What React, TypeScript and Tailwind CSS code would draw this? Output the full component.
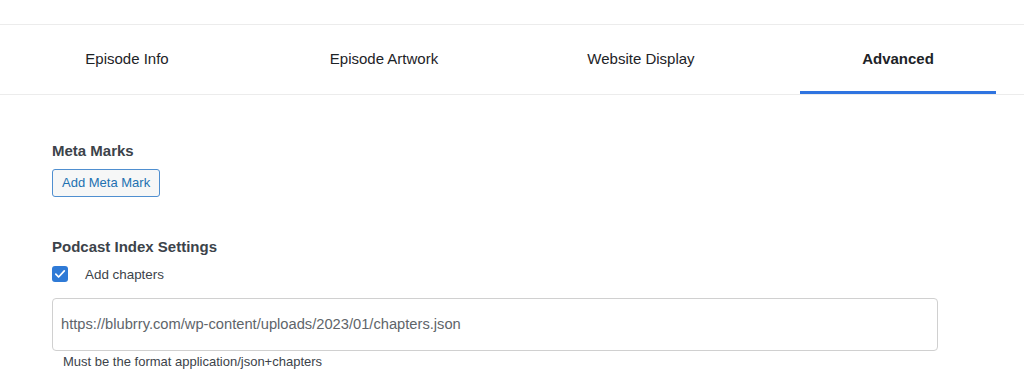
import React from "react";

const font = { fontFamily: '-apple-system, "Helvetica Neue", "Liberation Sans", Arial, sans-serif' };

export default function App() {
  const tabs = ["Episode Info", "Episode Artwork", "Website Display", "Advanced"];
  const active = 3;

  return (
    <div className="w-[1024px] h-[389px] bg-white overflow-hidden" style={font}>
      <div className="h-6" />
      <div className="flex h-[71px] border-t border-b border-[#ececec] text-[15px] text-[#1d2327]">
        {tabs.map((t, i) => (
          <div key={t} className="w-[257px] shrink-0 pl-[29px] pr-[32px] flex">
            <div
              className={
                "flex-1 flex items-center justify-center pt-[2px] border-b-[3px] " +
                (i === active ? "border-[#2f74e0] font-bold" : "border-transparent")
              }
            >
              {t}
            </div>
          </div>
        ))}
      </div>

      <div className="pl-[52px] pt-[46px] text-[#3c434a]">
        <h3 className="text-[15px] font-bold leading-5 mb-[8px]">Meta Marks</h3>
        <button className="h-[28px] px-[9px] rounded-[3px] border border-[#4f8fd0] bg-[#f6f7f7] text-[13px] text-[#2271b1]">
          Add Meta Mark
        </button>

        <h3 className="text-[15px] font-bold leading-5 mt-[40px] mb-[8px]">Podcast Index Settings</h3>
        <label className="flex items-center h-[18px]">
          <span className="w-[16px] h-[16px] rounded-[3px] bg-[#2f7ad6] flex items-center justify-center">
            <svg width="12" height="12" viewBox="0 0 12 12" fill="none">
              <path d="M1.8 6.2 4.6 9 10.3 2.8" stroke="white" strokeWidth="1.7" strokeLinecap="round" strokeLinejoin="round" />
            </svg>
          </span>
          <span className="ml-[17px] pt-[3px] text-[13.4px] text-[#3c434a]">Add chapters</span>
        </label>

        <div className="mt-[15px] w-[886px] h-[53px] rounded-[4px] border border-[#d0d0d0] flex items-center pl-[8px] text-[14.7px] text-[#60656a]">
          https://blubrry.com/wp-content/uploads/2023/01/chapters.json
        </div>
        <p className="pl-[11px] mt-[1px] text-[13px] text-[#3c434a]">Must be the format application/json+chapters</p>
      </div>
    </div>
  );
}
